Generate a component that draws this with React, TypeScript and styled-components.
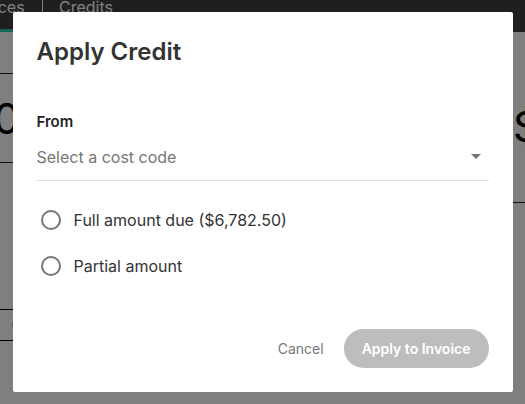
import React, { FC } from 'react';
import styled, { createGlobalStyle } from 'styled-components';

const GlobalStyle = createGlobalStyle`
    html, body {
        margin: 0;
        padding: 0;
        background: #ffffff;
        font-family: Inter, "Liberation Sans", sans-serif;
        overflow: hidden;
    }
`

const Page = styled.div`
    width: 525px;
    height: 404px;
    position: relative;
    overflow: hidden;
`

const Header = styled.div`
    height: 32px;
    background: #3e3e3e;
    display: flex;
    align-items: flex-start;
    margin-left: -38px;
`

const Tab = styled.div<{ $active?: boolean }>`
    height: 32px;
    box-sizing: border-box;
    font-size: 16px;
    line-height: 14px;
    color: #ffffff;
    border-bottom: 3px solid ${p => (p.$active ? '#2ad1b0' : 'transparent')};
    width: ${p => (p.$active ? '72px' : 'auto')};
`

const TabDivider = styled.div`
    width: 1px;
    height: 14px;
    background: #ffffff;
    margin: 0 16px 0 8px;
`

const Content = styled.div`
    display: flex;
    justify-content: space-between;
`

const LeftColumn = styled.div`
    width: 200px;
    margin-left: -180px;
    display: flex;
    flex-direction: column;
`

const SummaryBox = styled.div`
    margin-top: 41px;
    height: 88px;
    border-top: 1px solid #222;
    border-bottom: 1px solid #222;
    display: flex;
    align-items: center;
    justify-content: flex-end;
    font-size: 42px;
    color: #000;
`

const OutlineButton = styled.div`
    margin-top: 146px;
    height: 30px;
    border-top: 1px solid #000;
    border-bottom: 1px solid #000;
    display: flex;
    align-items: center;
    justify-content: flex-end;
    font-size: 16px;
    color: #111;
    margin-right: -13px;
`

const RightColumn = styled.div`
    width: 200px;
    margin-right: -188px;
`

const RightBox = styled.div`
    height: 171px;
    border-bottom: 1px solid #222;
    padding-top: 74px;
    box-sizing: border-box;
    font-size: 42px;
    color: #000;
    line-height: 1;
`

const Overlay = styled.div`
    position: absolute;
    inset: 0;
    background: rgba(0, 0, 0, 0.5);
    display: flex;
    align-items: flex-start;
    justify-content: center;
    padding-top: 12px;
`

const Modal = styled.div`
    width: 500px;
    height: 380px;
    box-sizing: border-box;
    background: #ffffff;
    border-radius: 2px;
    padding: 24px 24px 24px 24px;
    display: flex;
    flex-direction: column;
`

const Title = styled.h2`
    margin: 0;
    font-size: 24px;
    line-height: 32px;
    font-weight: 600;
    color: #333333;
`

const FieldLabel = styled.div`
    margin-top: 44px;
    font-size: 15px;
    font-weight: 600;
    color: #222222;
`

const Select = styled.div`
    margin-top: 8px;
    height: 42px;
    border-bottom: 1px solid #e0e0e0;
    display: flex;
    align-items: center;
    justify-content: space-between;
    padding-bottom: 6px;
    box-sizing: border-box;
`

const Placeholder = styled.span`
    font-size: 16px;
    color: #767676;
`

const Caret = styled.span`
    width: 0;
    height: 0;
    border-left: 5px solid transparent;
    border-right: 5px solid transparent;
    border-top: 5px solid #757575;
    margin-right: 8px;
`

const RadioGroup = styled.div`
    margin-top: 29px;
    display: flex;
    flex-direction: column;
    gap: 26px;
`

const RadioRow = styled.label`
    display: flex;
    align-items: center;
    gap: 13px;
    padding-left: 4px;
    font-size: 16px;
    color: #333333;
`

const RadioCircle = styled.span`
    width: 16px;
    height: 16px;
    border: 2px solid #757575;
    border-radius: 50%;
`

const Footer = styled.div`
    margin-top: auto;
    display: flex;
    justify-content: flex-end;
    align-items: center;
    gap: 20px;
`

const TextButton = styled.button`
    background: none;
    border: none;
    padding: 0;
    font-family: inherit;
    font-size: 14px;
    color: #777777;
`

const PrimaryButton = styled.button`
    height: 39px;
    padding: 0 18px;
    border: none;
    border-radius: 20px;
    background: #bdbdbd;
    color: #ffffff;
    font-family: inherit;
    font-size: 14px;
    font-weight: 600;
`

const App: FC = () => {
    return (
        <Page>
            <GlobalStyle />
            <Header>
                <Tab $active>Invoices</Tab>
                <TabDivider />
                <Tab>Credits</Tab>
            </Header>
            <Content>
                <LeftColumn>
                    <SummaryBox>$0</SummaryBox>
                    <OutlineButton>Ov</OutlineButton>
                </LeftColumn>
                <RightColumn>
                    <RightBox>$</RightBox>
                </RightColumn>
            </Content>
            <Overlay>
                <Modal>
                    <Title>Apply Credit</Title>
                    <FieldLabel>From</FieldLabel>
                    <Select>
                        <Placeholder>Select a cost code</Placeholder>
                        <Caret />
                    </Select>
                    <RadioGroup>
                        <RadioRow>
                            <RadioCircle />
                            Full amount due ($6,782.50)
                        </RadioRow>
                        <RadioRow>
                            <RadioCircle />
                            Partial amount
                        </RadioRow>
                    </RadioGroup>
                    <Footer>
                        <TextButton>Cancel</TextButton>
                        <PrimaryButton>Apply to Invoice</PrimaryButton>
                    </Footer>
                </Modal>
            </Overlay>
        </Page>
    );
}

export default App;
